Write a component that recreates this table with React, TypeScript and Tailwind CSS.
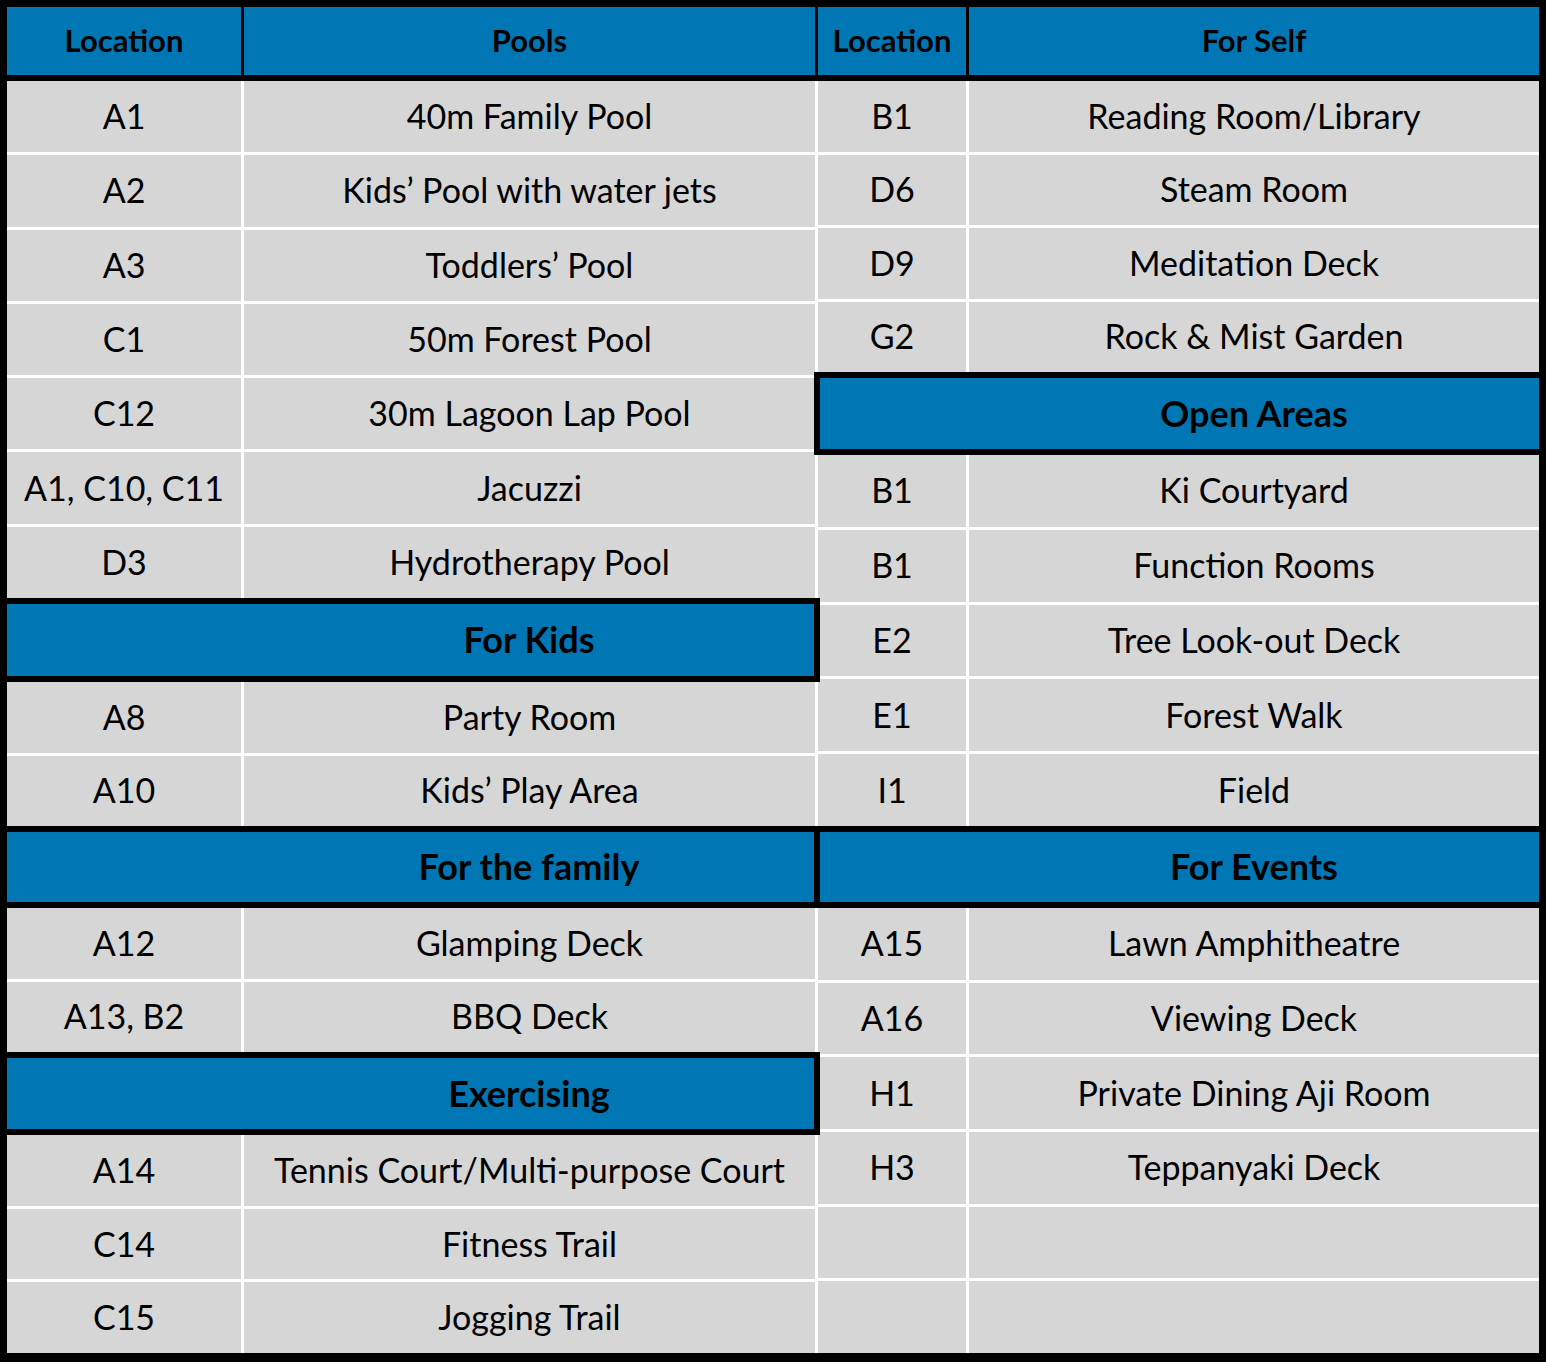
type Row = [string, string];
type Block = { title?: string; titleH?: string; bodyH: string; rows: Row[] };

const leftHead: Row = ["Location", "Pools"];
const rightHead: Row = ["Location", "For Self"];

const leftBlocks: Block[] = [
  {
    bodyH: "h-[517px]",
    rows: [
      ["A1", "40m Family Pool"],
      ["A2", "Kids’ Pool with water jets"],
      ["A3", "Toddlers’ Pool"],
      ["C1", "50m Forest Pool"],
      ["C12", "30m Lagoon Lap Pool"],
      ["A1, C10, C11", "Jacuzzi"],
      ["D3", "Hydrotherapy Pool"],
    ],
  },
  {
    title: "For Kids",
    titleH: "h-[84px]",
    bodyH: "h-[144px]",
    rows: [
      ["A8", "Party Room"],
      ["A10", "Kids’ Play Area"],
    ],
  },
  {
    title: "For the family",
    titleH: "h-[82px]",
    bodyH: "h-[144px]",
    rows: [
      ["A12", "Glamping Deck"],
      ["A13, B2", "BBQ Deck"],
    ],
  },
  {
    title: "Exercising",
    titleH: "h-[83px]",
    bodyH: "h-[218px]",
    rows: [
      ["A14", "Tennis Court/Multi-purpose Court"],
      ["C14", "Fitness Trail"],
      ["C15", "Jogging Trail"],
    ],
  },
];

const rightBlocks: Block[] = [
  {
    bodyH: "h-[291px]",
    rows: [
      ["B1", "Reading Room/Library"],
      ["D6", "Steam Room"],
      ["D9", "Meditation Deck"],
      ["G2", "Rock & Mist Garden"],
    ],
  },
  {
    title: "Open Areas",
    titleH: "h-[83px]",
    bodyH: "h-[371px]",
    rows: [
      ["B1", "Ki Courtyard"],
      ["B1", "Function Rooms"],
      ["E2", "Tree Look-out Deck"],
      ["E1", "Forest Walk"],
      ["I1", "Field"],
    ],
  },
  {
    title: "For Events",
    titleH: "h-[82px]",
    bodyH: "h-[445px]",
    rows: [
      ["A15", "Lawn Amphitheatre"],
      ["A16", "Viewing Deck"],
      ["H1", "Private Dining Aji Room"],
      ["H3", "Teppanyaki Deck"],
      ["", ""],
      ["", ""],
    ],
  },
];

function Column({
  head,
  blocks,
  side,
}: {
  head: Row;
  blocks: Block[];
  side: "left" | "right";
}) {
  const locW = side === "left" ? "w-[234px]" : "w-[148px]";
  return (
    <div className={`flex flex-col ${side === "left" ? "w-[811px]" : "w-[721px]"}`}>
      {/* column titles */}
      <div className="h-[74px] shrink-0 flex bg-black border-b-[6px] border-black">
        <div
          className={`${locW} shrink-0 bg-[#0077b5] flex items-center justify-center pb-[2px] font-bold text-[31px]`}
        >
          {head[0]}
        </div>
        <div className="w-[3px] shrink-0" />
        <div className="flex-1 bg-[#0077b5] flex items-center justify-center pb-[2px] font-bold text-[31px]">
          {head[1]}
        </div>
        {side === "left" && <div className="w-[3px] shrink-0" />}
      </div>

      {blocks.map((b, bi) => (
        <div key={bi} className="contents">
          {b.title &&
            (side === "left" ? (
              <div
                className={`relative z-10 ${b.titleH} shrink-0 w-[813px] flex bg-[#0077b5] border-y-[6px] border-r-[6px] border-black`}
              >
                <div className="w-[237px] shrink-0" />
                <div className="flex-1 flex items-center justify-center pb-[2px] font-bold text-[36px]">
                  {b.title}
                </div>
              </div>
            ) : (
              <div
                className={`relative z-10 ${b.titleH} shrink-0 -ml-[4px] flex bg-[#0077b5] border-y-[6px] border-l-[6px] border-black`}
              >
                <div className="w-[149px] shrink-0" />
                <div className="flex-1 flex items-center justify-center pb-[2px] font-bold text-[36px]">
                  {b.title}
                </div>
              </div>
            ))}
          <div className={`${b.bodyH} shrink-0 flex flex-col`}>
            {b.rows.map((r, ri) => (
              <div
                key={ri}
                className={`flex-1 basis-0 min-h-0 flex bg-white ${
                  ri < b.rows.length - 1 ? "border-b-[3px] border-white" : ""
                }`}
              >
                <div
                  className={`${locW} shrink-0 bg-[#d6d6d6] flex items-center justify-center pb-[2px] text-[34px]`}
                >
                  {r[0]}
                </div>
                <div className="w-[3px] shrink-0" />
                <div className="flex-1 bg-[#d6d6d6] flex items-center justify-center pb-[2px] text-[34px]">
                  {r[1]}
                </div>
                {side === "left" && <div className="w-[3px] shrink-0" />}
              </div>
            ))}
          </div>
        </div>
      ))}
    </div>
  );
}

export default function App() {
  return (
    <div
      className="w-[1546px] h-[1362px] bg-black pt-[7px] pl-[7px] pr-[7px] pb-[9px] text-black"
      style={{ fontFamily: "Lato, 'Open Sans', sans-serif" }}
    >
      <div className="flex h-full">
        <Column head={leftHead} blocks={leftBlocks} side="left" />
        <Column head={rightHead} blocks={rightBlocks} side="right" />
      </div>
    </div>
  );
}
